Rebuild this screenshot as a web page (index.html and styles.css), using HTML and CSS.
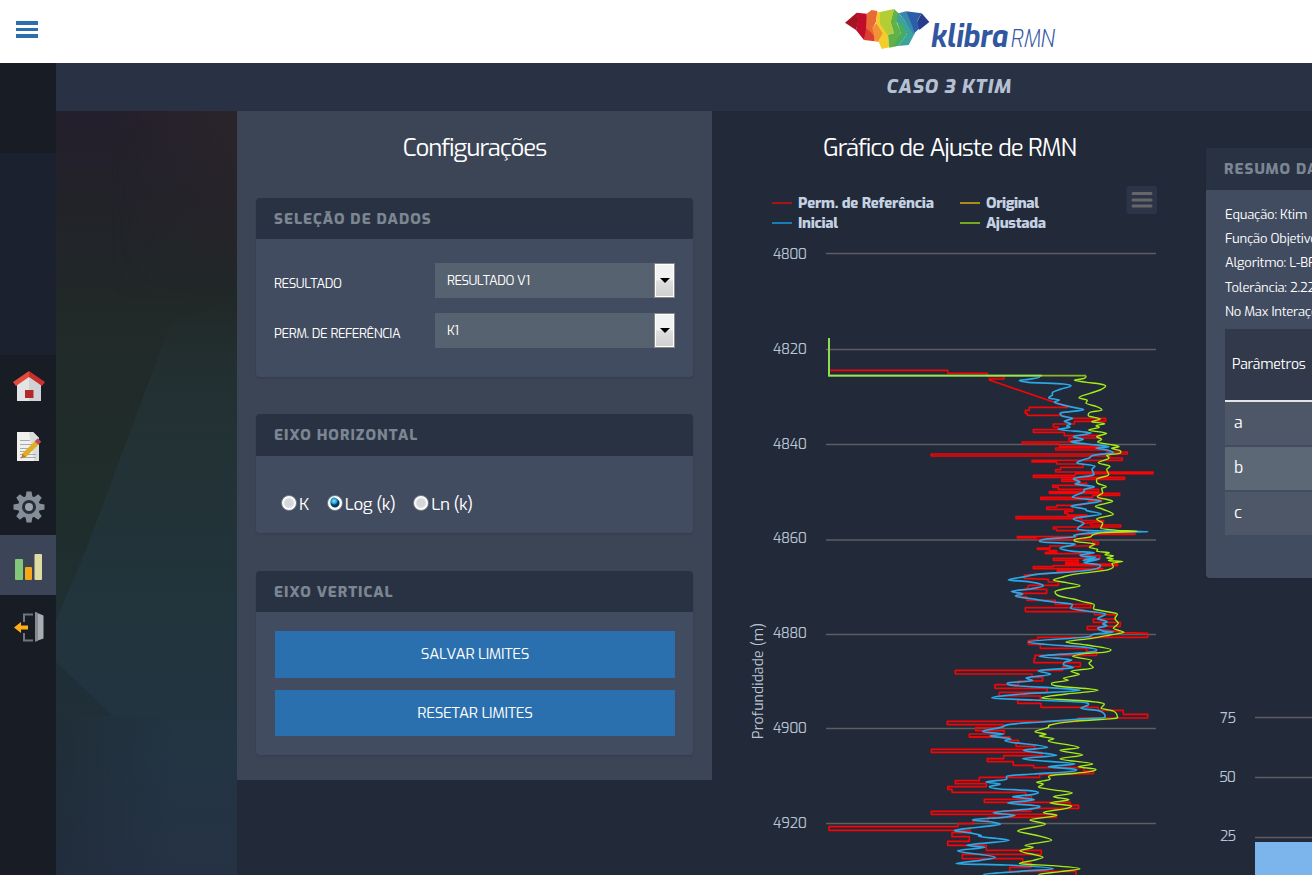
FILE: index.html
```html
<!DOCTYPE html>
<html lang="pt-BR">
<head>
<meta charset="utf-8">
<title>klibra RMN</title>
<link rel="stylesheet" href="styles.css">
</head>
<body>
<header class="topbar">
  <button class="burger" aria-label="Menu"><i></i><i></i><i></i></button>
  <svg class="logo" viewBox="845 6 212 46" role="img" aria-label="klibra RMN">
    <g transform="translate(830 0) scale(.33333)">
      <path fill="#a31621" d="M45 68L80 38 86 60 78 90z"/>
      <path fill="#c00d2b" d="M80 38L110 41 116 84 102 120 78 90 84 62z"/>
      <path fill="#dc3d31" d="M108 84L120 78 135 100 134 124 102 120z"/>
      <path fill="#ea6a33" d="M110 41L125 30 142 33 138 66 128 84 134 108 108 84z"/>
      <path fill="#f19236" d="M128 82L140 68 162 100 148 126 134 124z"/>
      <path fill="#f3cd2b" d="M142 36L152 36 150 70 174 104 178 142 155 147 145 122 158 100 138 68z"/>
      <path fill="#b5cd35" d="M150 36L192 27 182 66 192 100 172 104 150 72z"/>
      <path fill="#62b146" d="M192 27L208 42 200 68 212 96 200 139 178 143 174 104 192 100 182 66z"/>
      <path fill="#45ac62" d="M200 64L222 72 230 104 205 138 192 138 212 98z"/>
      <path fill="#3aa39b" d="M204 38L225 62 246 84 252 104 236 135 205 138 230 104 218 72 200 66z"/>
      <path fill="#3987ad" d="M206 40L228 34 246 60 258 90 252 106 226 64z"/>
      <path fill="#2c5da8" d="M228 34L275 40 262 62 270 84 254 98 240 60z"/>
      <path fill="#283c8c" d="M275 40L298 66 268 90 262 64z"/>
    </g>
    <text x="930" y="47" class="logo-word" textLength="77" lengthAdjust="spacingAndGlyphs">klibra</text>
    <text x="1010" y="47" class="logo-suffix" textLength="44" lengthAdjust="spacingAndGlyphs">RMN</text>
  </svg>
</header>
<div class="body">
  <nav class="side">
    <div class="side-user"></div>
    <a class="side-item"><svg viewBox="0 0 32 32"><path fill="#e3e4e6" d="M4 13L16 5l12 8v17H4z"/><path fill="#d0d3d6" d="M16 5l12 8v17H16z"/><path fill="#e24a3b" d="M16 0v6L3 15 0 11z"/><path fill="#c9302d" d="M16 0v6l13 9 3-4z"/><path fill="#b6292a" d="M12 19h8.500v8H12z"/></svg></a>
    <a class="side-item"><svg viewBox="0 0 32 32"><path fill="#f0f0ef" d="M4 1h16l6 6v23H4z"/><path fill="#dadcdb" d="M16 1h4l6 6v23h-5z"/><path stroke="#a5aaac" d="M7 9.500h10M7 13.500h12M7 17.500h12M7 20.500h11M7 23.500h16M7 26.500h16"/><path stroke="#e0ac22" stroke-width="5" d="M11 24.500L24 11.500"/><path fill="#c07b23" d="M8 27.500l1.500-5 3.500 3.500z"/><path stroke="#ba4b55" stroke-width="5" d="M23.500 12l3-3"/></svg></a>
    <a class="side-item"><svg viewBox="0 0 32 32"><g fill="#858e98"><path id="tooth" d="M12.500 6l1-5.500h5l1 5.500v20l-1 5.500h-5l-1-5.500z"/><use href="#tooth" transform="rotate(45 16 16)"/><use href="#tooth" transform="rotate(90 16 16)"/><use href="#tooth" transform="rotate(135 16 16)"/><circle cx="16" cy="16" r="11"/></g><circle cx="16" cy="16" r="7" fill="#272e38"/><circle cx="16" cy="16" r="4" fill="#9aa4ad"/></svg></a>
    <a class="side-item active"><svg viewBox="0 0 32 32"><rect x="2" y="8" width="8" height="21" rx="1" fill="#83c878"/><rect x="12" y="16" width="7" height="13" rx="1" fill="#f6a916"/><rect x="21.500" y="3" width="7.500" height="26" rx="1" fill="#dedca3"/></svg></a>
    <a class="side-item"><svg viewBox="0 0 32 32"><path fill="none" stroke="#6f757e" stroke-width="2" d="M20 3.500h-9V11m0 11v7.500h9"/><path fill="#a6adb3" d="M22 1l8.500 3.500v23L22 30.500z"/><path fill="#858b92" d="M22 1l3 1v28l-3 .5z"/><path fill="#ffad19" d="M1 16.500L8 11v3.500h7v4H8V22z"/></svg></a>
  </nav>
  <main class="main">
    <h1 class="case-title">CASO 3 KTIM</h1>
    <div class="columns">
      <div class="backdrop"><svg viewBox="56 111 181 764" preserveAspectRatio="none">
        <defs><linearGradient id="night" x1="0" y1="0" x2="0" y2="1"><stop offset="0" stop-color="#241f2d"/><stop offset=".13" stop-color="#222329"/><stop offset=".28" stop-color="#212a28"/><stop offset=".55" stop-color="#1f2e2c"/><stop offset=".75" stop-color="#202f37"/><stop offset="1" stop-color="#222d3d"/></linearGradient>
        <linearGradient id="facet" x1="0" y1="0" x2="0" y2="1"><stop offset="0" stop-color="#243034" stop-opacity="0"/><stop offset=".15" stop-color="#243235" stop-opacity=".8"/><stop offset=".5" stop-color="#22343b"/><stop offset=".8" stop-color="#233443"/><stop offset="1" stop-color="#253244"/></linearGradient>
        <linearGradient id="ember" x1="0" y1="0" x2="1" y2="0"><stop offset=".3" stop-color="#2b252b" stop-opacity="0"/><stop offset="1" stop-color="#2b252a"/></linearGradient>
        <linearGradient id="fade" x1="0" y1="0" x2="0" y2="1"><stop offset="0" stop-color="#fff"/><stop offset="1" stop-color="#000"/></linearGradient>
        <linearGradient id="reach" gradientUnits="userSpaceOnUse" x1="56" y1="0" x2="170" y2="0"><stop offset="0" stop-color="#fff" stop-opacity="0"/><stop offset="1" stop-color="#fff"/></linearGradient>
        <mask id="top"><path fill="url(#fade)" d="M56 111h181v190H56z"/></mask>
        <mask id="low"><path fill="#fff" d="M56 111h181v605H56z"/><path fill="url(#reach)" d="M56 716h181v159H56z"/></mask></defs>
        <path fill="url(#night)" d="M56 111h181v764H56z"/><path fill="url(#ember)" mask="url(#top)" d="M56 111h181v190H56z"/>
        <path fill="url(#facet)" mask="url(#low)" d="M171 322l66-25v578H56V716h57L56 662v-42l30-70z"/>
      </svg></div>
      <section class="config">
        <h2 class="col-title config-title">Configurações</h2>
        <div class="panel data-panel">
          <h3 class="panel-head">SELEÇÃO DE DADOS</h3>
          <div class="fields">
            <div class="field"><label>RESULTADO</label><div class="select"><span>RESULTADO V1</span><b></b></div></div>
            <div class="field"><label>PERM. DE REFERÊNCIA</label><div class="select"><span>K1</span><b></b></div></div>
          </div>
        </div>
        <div class="panel axis-x-panel">
          <h3 class="panel-head tall">EIXO HORIZONTAL</h3>
          <div class="radios"><label><i></i>K</label><label><i class="on"></i>Log (k)</label><label><i></i>Ln (k)</label></div>
        </div>
        <div class="panel axis-y-panel">
          <h3 class="panel-head">EIXO VERTICAL</h3>
          <div class="buttons"><button>SALVAR LIMITES</button><button>RESETAR LIMITES</button></div>
        </div>
      </section>
      <section class="fit">
        <h2 class="col-title">Gráfico de Ajuste de RMN</h2>
        <svg class="fit-chart" viewBox="712 175 475 700">
          <g class="legend">
            <path stroke="#a81318" stroke-width="2" d="M772 203h20"/><text x="798" y="208" textLength="136">Perm. de Referência</text>
            <path stroke="#ae8c14" stroke-width="2" d="M960 203h20"/><text x="986" y="208" textLength="53">Original</text>
            <path stroke="#177db5" stroke-width="2" d="M772 223h20"/><text x="798" y="228" textLength="40">Inicial</text>
            <path stroke="#76a81b" stroke-width="2" d="M960 223h20"/><text x="986" y="228" textLength="60">Ajustada</text>
          </g>
          <rect x="1126.500" y="186" width="30.500" height="28" rx="3" fill="#2c3548"/>
          <path d="M1133 193.500h18M1133 200h18M1133 206h18" stroke="#666" stroke-width="3" stroke-linecap="round"/>
          <path class="grid" d="M826 253.500h330M826 349.500h330M826 444.500h330M826 540h330M826 634.500h330M826 728.500h330M826 823.500h330"/>
          <g class="ticks"><text x="773" y="259" textLength="34">4800</text><text x="773" y="354" textLength="34">4820</text><text x="773" y="449" textLength="34">4840</text><text x="773" y="543" textLength="34">4860</text><text x="773" y="638" textLength="34">4880</text><text x="773" y="733" textLength="34">4900</text><text x="773" y="828" textLength="34">4920</text></g>
          <text class="axis-name" transform="translate(762.500 739) rotate(-90)" textLength="116">Profundidade (m)</text>
          <g class="series red">
            <path transform="translate(900 330) scale(.33333)" d="M-213 121L143 121 143 130 262 130 262 139 312 139 312 147 268 147 268 150 463 217 503 228 503 232 388 232 388 241 376 241 376 250 382 250 382 256 485 256 510 265 617 265 617 274 523 274 523 282 460 282 460 291 475 291 475 299 400 299 400 307 493 307 493 317 600 317 600 324 507 324 507 331 540 336 367 336 367 342 478 342 478 349 600 349 600 354 467 354 467 360 620 360 620 366 682 366 682 372 94 372 94 378 630 378 630 384 667 384 667 391 396 391 396 396 470 396 470 402 549 402 549 412 482 412 482 419 467 419 467 426 759 426 759 431 525 431"/>
            <path transform="translate(900 470) scale(.33333)" d="M525 11L525 16 400 16 400 22 674 22 674 28 485 28 485 34 535 34 535 40 560 40 560 46 458 46 458 52 475 52 475 58 596 58 596 65 448 65 448 70 659 70 659 76 578 76 578 82 422 82 422 88 605 88 605 94 565 94 565 100 540 106 470 106 470 111 440 111 440 118 518 118 518 124 494 124 494 130 503 130 503 135 560 135 560 140 348 140 348 146 545 146 545 152 611 152 611 156 545 160 572 160 572 165 662 165 662 171 460 171 460 177 470 177 470 182 565 182 565 190 705 190 705 193 530 193 530 200 352 200 352 204 407 204 407 209 578 209 578 216 595 216 595 223 575 223 575 228 450 228 450 234 412 234 412 238 448 238 448 242 470 242 470 247 436 247 436 251 545 251 545 257 600 257 600 265 460 265 460 271 535 271 535 277 497 277 497 282 653 282 653 287 460 287 460 290 400 290 400 296 608 296 608 299 472 299 472 304 530 304 373 315 373 325 445 328 445 336 475 336 475 346 385 346 385 353 370 358 440 358 440 370 350 370 350 380 380 380 380 391 466 391 466 403 572 403 572 413 376 413 376 425"/>
            <path transform="translate(900 600) scale(.33333)" d="M376 35L583 35 583 44 645 44 645 57 580 57 580 67 661 67 661 79 562 79 562 89 608 89 672 98 743 100 743 112 413 112 413 119 385 122 385 133 421 133 421 145 560 145 560 155 590 155 590 166 405 166 405 176 402 176 402 188 541 188 541 200 488 200 488 211 166 211 166 222 396 222 396 232 428 232 428 243 355 243 355 254 285 254 285 265 441 265 441 277 298 277 298 288 421 288 421 300 353 300 353 310 423 310 423 322 595 322 595 331 670 331 670 343 743 343 743 354 535 354 535 364 142 364 142 374 310 374 310 383 227 383 227 392 313 392 313 402 208 402 208 411 330 411"/>
            <path transform="translate(820 735) scale(.33333)" d="M448 6L570 6 570 16 595 16 595 25 588 25 588 34 645 34 645 43 334 43 334 52 665 52 665 62 551 62 551 71 502 71 502 80 580 80 580 91 641 91 641 98 792 98 792 108 820 108 820 116 659 118 659 127 478 127 478 137 406 137 406 146 499 146 499 155 383 155 383 163 396 163 396 172 617 172 617 183 634 183 634 193 493 193 493 202 751 202 751 211 776 211 776 220 632 220 632 229 334 229 334 238 709 238 709 247 505 247 505 257 460 257 460 266 414 266 414 275 27 275 27 286 451 286 451 293 396 293 396 305 448 305 448 319 383 319 383 331 499 331 499 346 664 346 664 358 427 358 427 371 608 371 608 385 633 385 633 397 569 397 569 409 768 409 768 420"/>
          </g>
          <g class="series blue">
            <path transform="translate(900 330) scale(.33333)" d="M418 139L418 142 385 148 358 151 385 157 490 162 513 167 480 178 458 187 457 195 446 204 478 210 463 216 510 230 551 239 485 248 484 257 518 265 493 274 512 282 500 288 510 292 475 298 573 309 520 320 550 328 513 336 560 342 627 350 588 354 622 360 640 368 580 376 568 384 548 390 530 399 585 408 576 418 582 434 520 446"/>
            <path transform="translate(900 470) scale(.33333)" d="M520 26L540 36 525 42 583 50 554 58 552 65 517 82 603 93 513 109 556 117 560 122 604 132 520 146 552 160 535 173 570 182 744 185 600 187 525 195 520 201 425 209 427 216 526 222 480 235 520 244 583 248 540 255 557 260 587 262 550 271 598 267 552 278 601 285 595 294 545 303 410 313 375 320 325 330 385 335 430 347 390 357 334 364 368 372 346 378 400 387 460 396 518 403"/>
            <path transform="translate(900 600) scale(.33333)" d="M518 13L512 25 560 33 617 42 593 56 621 65 608 72 621 77 593 84 613 94 640 96 580 103 560 111 385 126 460 135 540 140 590 150 560 158 418 169 515 180 495 186 490 194 520 203 415 212 452 223 378 234 398 242 322 249 345 257 480 265 541 271 380 281 275 294 400 300 540 306 565 314 543 325 595 332 613 342 615 353 530 358 420 366 330 373 303 382 248 395 310 402 270 408 330 416"/>
            <path transform="translate(820 735) scale(.33333)" d="M573 11L555 17 683 37 610 46 710 61 608 71 765 87 685 95 770 104 740 111 640 117 560 123 560 133 498 141 541 147 508 155 540 162 620 166 655 172 640 178 578 185 643 194 563 204 660 214 640 221 520 233 585 241 550 247 457 254 520 262 541 268 480 276 403 287 440 292 484 302 475 303 567 316 440 331 495 337 413 347 526 367 482 376 408 386 560 390 700 401 600 409 490 419"/>
          </g>
          <g class="series green">
            <path transform="translate(900 330) scale(.33333)" d="M558 137L553 145 523 151 560 157 600 162 617 168 600 180 570 190 537 203 562 211 558 219 590 230 606 240 570 247 565 257 601 267 575 275 614 281 588 287 598 292 566 300 620 310 590 320 605 328 593 336 640 345 657 350 635 355 660 362 662 369 620 376 627 384 595 398 630 409 620 418 626 434 590 448"/>
            <path transform="translate(900 470) scale(.33333)" d="M590 28L593 40 619 50 605 55 608 68 592 80 638 94 586 109 607 117 640 133 590 147 608 160 602 175 650 181 712 184 610 188 578 195 570 201 522 209 530 215 585 222 568 232 593 238 590 244 628 248 615 254 640 257 620 264 640 266 625 272 668 274 636 280 640 290 610 302 520 313 485 322 460 330 500 338 540 347 490 357 465 365 478 378 520 387 545 394 583 404"/>
            <path transform="translate(900 600) scale(.33333)" d="M583 14L580 26 610 33 652 42 645 56 655 70 640 85 672 97 630 105 575 115 498 126 560 135 633 149 610 157 560 160 518 169 575 181 567 190 580 203 513 214 538 223 490 235 505 241 455 249 470 258 594 271 500 282 425 294 560 303 613 312 603 325 640 333 652 350 640 356 520 364 450 375 445 382 405 395 438 403 418 408 462 416"/>
            <path transform="translate(820 735) scale(.33333)" d="M702 11L685 17 777 38 720 46 788 60 720 71 818 87 775 95 828 103 810 110 740 117 690 122 688 134 650 142 670 147 655 156 690 163 757 174 700 185 747 194 690 204 755 213 740 220 670 233 711 241 630 255 676 267 593 288 645 300 695 316 615 331 640 337 600 347 669 367 640 376 598 386 700 392 780 401 720 410 655 419"/>
          </g>
          <path class="lead" d="M829 338V375.700H1086"/>
          <path class="overlap" d="M829 338V375.700H1042"/>
        </svg>
      </section>
      <section class="summary">
        <div class="panel summary-panel">
          <h3 class="panel-head tall">RESUMO DA OTIMIZAÇÃO</h3>
          <div class="summary-body">
            <p>Equação: Ktim</p><p>Função Objetivo</p><p>Algoritmo: L-BFGS-B</p><p>Tolerância: 2.22e-09</p><p>No Max Interações</p>
            <table class="params"><thead><tr><th>Parâmetros</th></tr></thead><tbody><tr><td>a</td></tr><tr class="even"><td>b</td></tr><tr><td>c</td></tr></tbody></table>
          </div>
        </div>
        <svg class="bar-chart" viewBox="1206 700 437 175">
          <g class="ticks"><text x="1220" y="723" textLength="16">75</text><text x="1219" y="782" textLength="17">50</text><text x="1220" y="841" textLength="16">25</text></g>
          <path class="grid" d="M1255 717.500h388M1255 777.500h388M1255 837.500h388"/>
          <path fill="#7cb5ec" d="M1255 842h100v33h-100z"/>
        </svg>
      </section>
    </div>
  </main>
</div>
<script src="chart.js"></script>
</body>
</html>
```

FILE: styles.css
```css
* { box-sizing: border-box; }
body { margin: 0; width: 1312px; height: 875px; overflow: hidden; background: #222938; color: #fff; font-family: Exo, "Exo 2", Roboto, sans-serif; }
h1, h2, h3, p { margin: 0; font-weight: 400; }
button { border: 0; padding: 0; font-family: inherit; color: inherit; }

.topbar { width: 1901px; height: 63px; display: flex; justify-content: center; background: #fff; position: relative; }
.burger { position: absolute; left: 16px; top: 21px; width: 22px; background: none; display: grid; gap: 3px; }
.burger i { height: 3.500px; background: #2b6fae; }
.logo { width: 212px; height: 46px; margin-top: 6px; overflow: visible; }
.logo-word { font: italic 700 31px Exo, "Exo 2", Roboto, sans-serif; fill: #3157a0; }
.logo-suffix { font: italic 300 23px Exo, "Exo 2", Roboto, sans-serif; fill: #3157a0; }

.body { display: flex; width: 1841px; height: 812px; }
.side { width: 56px; background: #181c24; padding-top: 90px; flex: none; }
.side-user { height: 202px; background: #1c2130; }
.side-item { height: 60px; display: flex; align-items: center; justify-content: center; padding: 3px 0 0 1px; }
.side-item svg { width: 32px; height: 32px; }
.side-item.active { background: #3b4557; }
.main { flex: 1; }
.case-title { height: 48px; background: #293244; color: #b5c1d3; text-align: center; font-size: 19px; font-weight: 800; font-style: italic; line-height: 48px; letter-spacing: .9px; }
.columns { display: flex; align-items: flex-start; }
.backdrop { width: 181px; height: 764px; }
.backdrop svg { display: block; width: 100%; height: 100%; }

.config { width: 475px; height: 669px; background: #3b4556; padding: 0 19px; }
.col-title { height: 64px; font-size: 24px; line-height: 74px; text-align: center; letter-spacing: -1.050px; }
.config-title { height: 87px; }
.panel { background: #424c60; border-radius: 4px; overflow: hidden; box-shadow: 0 1px 2px rgba(30, 38, 52, .25); }
.panel-head { height: 41px; padding-left: 18px; background: #293243; color: #7c8693; font-size: 15px; font-weight: 800; line-height: 43px; letter-spacing: 1px; white-space: nowrap; }
.panel-head.tall { height: 42px; }
.data-panel { height: 179px; }
.fields { padding: 24px 18px 0; display: grid; gap: 15px; }
.field { display: flex; height: 35px; }
.field label { width: 161px; font-size: 13px; line-height: 41px; letter-spacing: -.42px; }
.select { flex: 1; display: flex; background: #56626f; }
.select span { flex: 1; padding-left: 12px; font-size: 13px; line-height: 35px; letter-spacing: -.5px; }
.select b { width: 21px; border: 1px solid #888; box-shadow: inset 0 0 0 1px #fff; background: linear-gradient(#f2f2f2 0 48%, #dedede 52%, #cfcfcf); display: flex; align-items: center; justify-content: center; }
.select b::after { content: ""; border: 5px solid transparent; border-top-color: #000; border-bottom: 0; }
.axis-x-panel { height: 119px; margin-top: 37px; }
.radios { display: flex; gap: 18px; padding: 37px 0 0 25px; font-size: 17px; line-height: 24px; letter-spacing: -.45px; }
.radios label { display: flex; align-items: center; gap: 2px; }
.radios i { width: 16px; height: 16px; border-radius: 50%; border: 1px solid #777d84; background: radial-gradient(circle, #d5d7da 0 4px, #fff 6px); margin-top: -4px; }
.radios i.on { background: radial-gradient(circle at 6px 5px, #9de0f5 0, #1598ca 3px, transparent 4px), radial-gradient(circle, #073c60 0 4px, #fff 5px); }
.axis-y-panel { height: 184px; margin-top: 38px; }
.buttons { padding: 19px 18px 0 19px; display: grid; gap: 12px; }
.buttons button { height: 46.500px; background: #2b70ae; font-size: 15px; letter-spacing: -.3px; }

.fit { width: 475px; }
.fit-chart { display: block; width: 475px; height: 700px; }
.legend text { font-size: 15px; font-weight: 800; fill: #c3d1e1; }
.ticks text, .axis-name { font-size: 14px; fill: #b8c5d4; }
.grid { stroke: #5c5e62; stroke-width: 1.300; fill: none; }
.series path { fill: none; stroke-width: 1.400; vector-effect: non-scaling-stroke; stroke-linejoin: round; }
.red path { stroke: #f50505; stroke-width: 1.600; }
.blue path { stroke: #2ba8e5; stroke-width: 1.700; }
.green path { stroke: #a5ee14; }
.lead, .overlap { fill: none; stroke: #8cba25; stroke-width: 1.700; }
.overlap { stroke: #92e858; }

.summary { width: 475px; padding: 37px 19px 0; }
.summary-panel { height: 430px; }
.summary-body { padding: 13px 19px 0; }
.summary-body p { font-size: 13px; line-height: 24.200px; letter-spacing: -.2px; white-space: nowrap; }
.params { width: 100%; margin-top: 5px; border-collapse: collapse; }
.params th { height: 72px; background: #31394b; border-bottom: 2px solid #e2e4e8; text-align: left; font-size: 14px; font-weight: 400; letter-spacing: -.25px; padding: 0 7px; }
.params td { height: 45px; padding: 0 9px 2px; font-size: 16px; background: #4d5768; border-bottom: 2px solid #424c60; }
.params .even td { background: #5c6876; }
.bar-chart { display: block; width: 437px; height: 175px; margin-top: 122px; }
```

FILE: chart.js
```js
// Turns the measured points of the fitted curves into splines along the depth axis.
function spline(points) {
  const slope = points.map((p, i) => {
    const a = points[i - 1], b = points[i + 1];
    if (!a || !b || (p[0] - a[0]) * (b[0] - p[0]) <= 0) return 0;
    return (b[0] - a[0]) / Math.max(b[1] - a[1], 1);
  });
  let d = `M${points[0]}`;
  for (let i = 1; i < points.length; i++) {
    const [x0, y0] = points[i - 1], [x1, y1] = points[i];
    const h = (y1 - y0) / 3;
    d += `C${x0 + slope[i - 1] * h} ${y0 + h} ${x1 - slope[i] * h} ${y1 - h} ${x1} ${y1}`;
  }
  return d;
}
document.querySelectorAll('.blue path, .green path').forEach((path) => {
  const n = path.getAttribute('d').match(/-?[\d.]+/g).map(Number);
  const points = [];
  for (let i = 0; i < n.length; i += 2) points.push([n[i], n[i + 1]]);
  path.setAttribute('d', spline(points));
});
```
